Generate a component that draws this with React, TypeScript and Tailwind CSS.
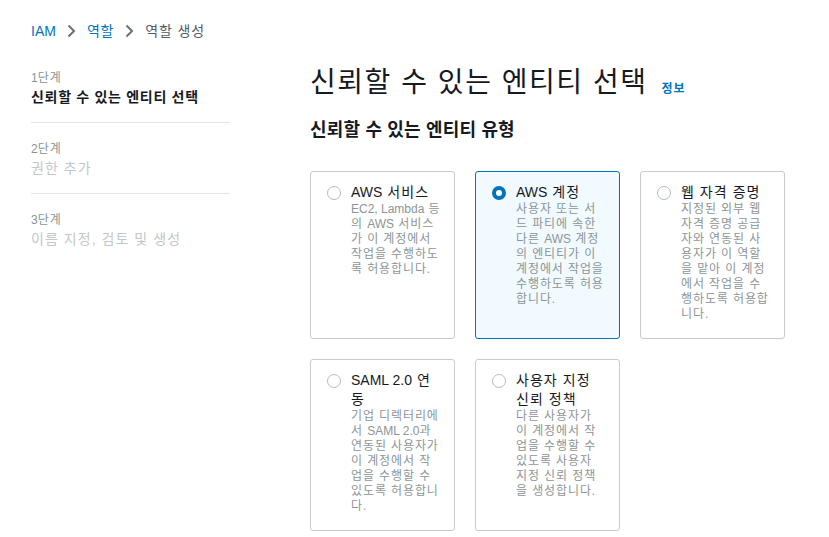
import React, { useState } from 'react';

const FONT = '"Liberation Sans", "Noto Sans CJK KR", sans-serif';

// Noto's Hangul runs narrower than the screenshot's font, so Korean text is tracked out
// and the Latin bits (AWS, EC2, SAML 2.0 ...) are put back to normal spacing.
const LATIN = /([A-Za-z0-9][A-Za-z0-9.,]*(?: [A-Za-z0-9][A-Za-z0-9.,]*)*)/;

function Ko({ t }: { t: string }) {
  return (
    <>
      {t.split(LATIN).map((p, i) =>
        i % 2 === 1 ? (
          <span key={i} className="tracking-normal">
            {p}
          </span>
        ) : (
          <React.Fragment key={i}>{p}</React.Fragment>
        )
      )}
    </>
  );
}

const steps = [
  { step: '1단계', label: '신뢰할 수 있는 엔티티 선택', active: true },
  { step: '2단계', label: '권한 추가', active: false },
  { step: '3단계', label: '이름 지정, 검토 및 생성', active: false },
];

// lines broken where the narrow card column breaks them
const entityTypes = [
  {
    id: 'service',
    title: ['AWS 서비스'],
    desc: ['EC2, Lambda 등', '의 AWS 서비스', '가 이 계정에서', '작업을 수행하도', '록 허용합니다.'],
  },
  {
    id: 'account',
    title: ['AWS 계정'],
    desc: [
      '사용자 또는 서',
      '드 파티에 속한',
      '다른 AWS 계정',
      '의 엔티티가 이',
      '계정에서 작업을',
      '수행하도록 허용',
      '합니다.',
    ],
  },
  {
    id: 'web',
    title: ['웹 자격 증명'],
    desc: [
      '지정된 외부 웹',
      '자격 증명 공급',
      '자와 연동된 사',
      '용자가 이 역할',
      '을 맡아 이 계정',
      '에서 작업을 수',
      '행하도록 허용합',
      '니다.',
    ],
  },
  {
    id: 'saml',
    title: ['SAML 2.0 연', '동'],
    desc: [
      '기업 디렉터리에',
      '서 SAML 2.0과',
      '연동된 사용자가',
      '이 계정에서 작',
      '업을 수행할 수',
      '있도록 허용합니',
      '다.',
    ],
  },
  {
    id: 'custom',
    title: ['사용자 지정', '신뢰 정책'],
    desc: ['다른 사용자가', '이 계정에서 작', '업을 수행할 수', '있도록 사용자', '지정 신뢰 정책', '을 생성합니다.'],
  },
];

function Chevron() {
  return (
    <svg width="9" height="14" viewBox="0 0 9 14" className="mx-[11px]">
      <path d="M1.5 1.5 L7 7 L1.5 12.5" fill="none" stroke="#687078" strokeWidth="2" />
    </svg>
  );
}

function EntityCard({
  title,
  desc,
  selected,
  onSelect,
}: {
  title: string[];
  desc: string[];
  selected: boolean;
  onSelect: () => void;
}) {
  return (
    <div
      onClick={onSelect}
      className={
        selected
          ? 'flex cursor-pointer gap-[10px] rounded-[3px] border border-[#0073bb] bg-[#f1faff] pt-[11px] pb-[16px] pl-[16px] pr-[13px]'
          : 'flex cursor-pointer gap-[10px] rounded-[3px] border border-[#c6cbcc] bg-white pt-[11px] pb-[16px] pl-[16px] pr-[13px]'
      }
    >
      <div className="pt-[3px]">
        <div
          className={
            selected
              ? 'h-[14px] w-[14px] rounded-full border-[4px] border-[#0073bb] bg-white'
              : 'h-[14px] w-[14px] rounded-full border-[1.5px] border-[#b4bcbd] bg-white'
          }
        />
      </div>
      <div className="w-[91px]">
        {title.map((line) => (
          <div key={line} className="whitespace-nowrap text-[14px] leading-[19px] tracking-[0.075em] text-[#16191f]">
            <Ko t={line} />
          </div>
        ))}
        {desc.map((line) => (
          <div key={line} className="whitespace-nowrap text-[12px] leading-[15px] tracking-[0.075em] text-[#8d9596]">
            <Ko t={line} />
          </div>
        ))}
      </div>
    </div>
  );
}

export default function App() {
  const [selected, setSelected] = useState('account');

  return (
    <div className="h-[537px] w-[829px] overflow-hidden bg-white" style={{ fontFamily: FONT }}>
      {/* Breadcrumb */}
      <div className="flex items-center pl-[31px] pt-[21px] text-[14px] leading-[20px]">
        <span className="text-[#0073bb]">IAM</span>
        <Chevron />
        <span className="tracking-[0.06em] text-[#0073bb]">역할</span>
        <Chevron />
        <span className="tracking-[0.06em] text-[#545b64]">역할 생성</span>
      </div>

      <div className="flex pl-[31px] pt-[25px]">
        {/* Steps */}
        <nav className="w-[199px] shrink-0 pt-[4px]">
          {steps.map((s, i) => (
            <div
              key={s.step}
              className={i < steps.length - 1 ? 'mb-[18px] border-b border-[#e1e4e5] pb-[15px]' : ''}
            >
              <div className="text-[12px] leading-[17px] tracking-[0.075em] text-[#879596]">
                <Ko t={s.step} />
              </div>
              <div
                className={
                  s.active
                    ? 'text-[14px] font-bold leading-[20px] tracking-[0.05em] text-[#16191f]'
                    : 'text-[14px] leading-[20px] tracking-[0.075em] text-[#c2c8c9]'
                }
              >
                {s.label}
              </div>
            </div>
          ))}
        </nav>

        {/* Main */}
        <main className="ml-[80px]">
          <div className="flex items-end">
            <h1 className="text-[28px] leading-[34px] tracking-[0.055em] text-[#16191f]">
              신뢰할 수 있는 엔티티 선택
            </h1>
            <a className="mb-[3px] ml-[14px] text-[12px] font-bold leading-[16px] tracking-[0.075em] text-[#0073bb]">
              정보
            </a>
          </div>

          <h2 className="mt-[18px] text-[18px] font-bold leading-[24px] tracking-[0.01em] text-[#16191f]">
            신뢰할 수 있는 엔티티 유형
          </h2>

          <div className="mt-[29px] grid grid-cols-[145px_145px_145px] gap-[20px]">
            {entityTypes.map((e) => (
              <EntityCard
                key={e.id}
                title={e.title}
                desc={e.desc}
                selected={selected === e.id}
                onSelect={() => setSelected(e.id)}
              />
            ))}
          </div>
        </main>
      </div>
    </div>
  );
}
